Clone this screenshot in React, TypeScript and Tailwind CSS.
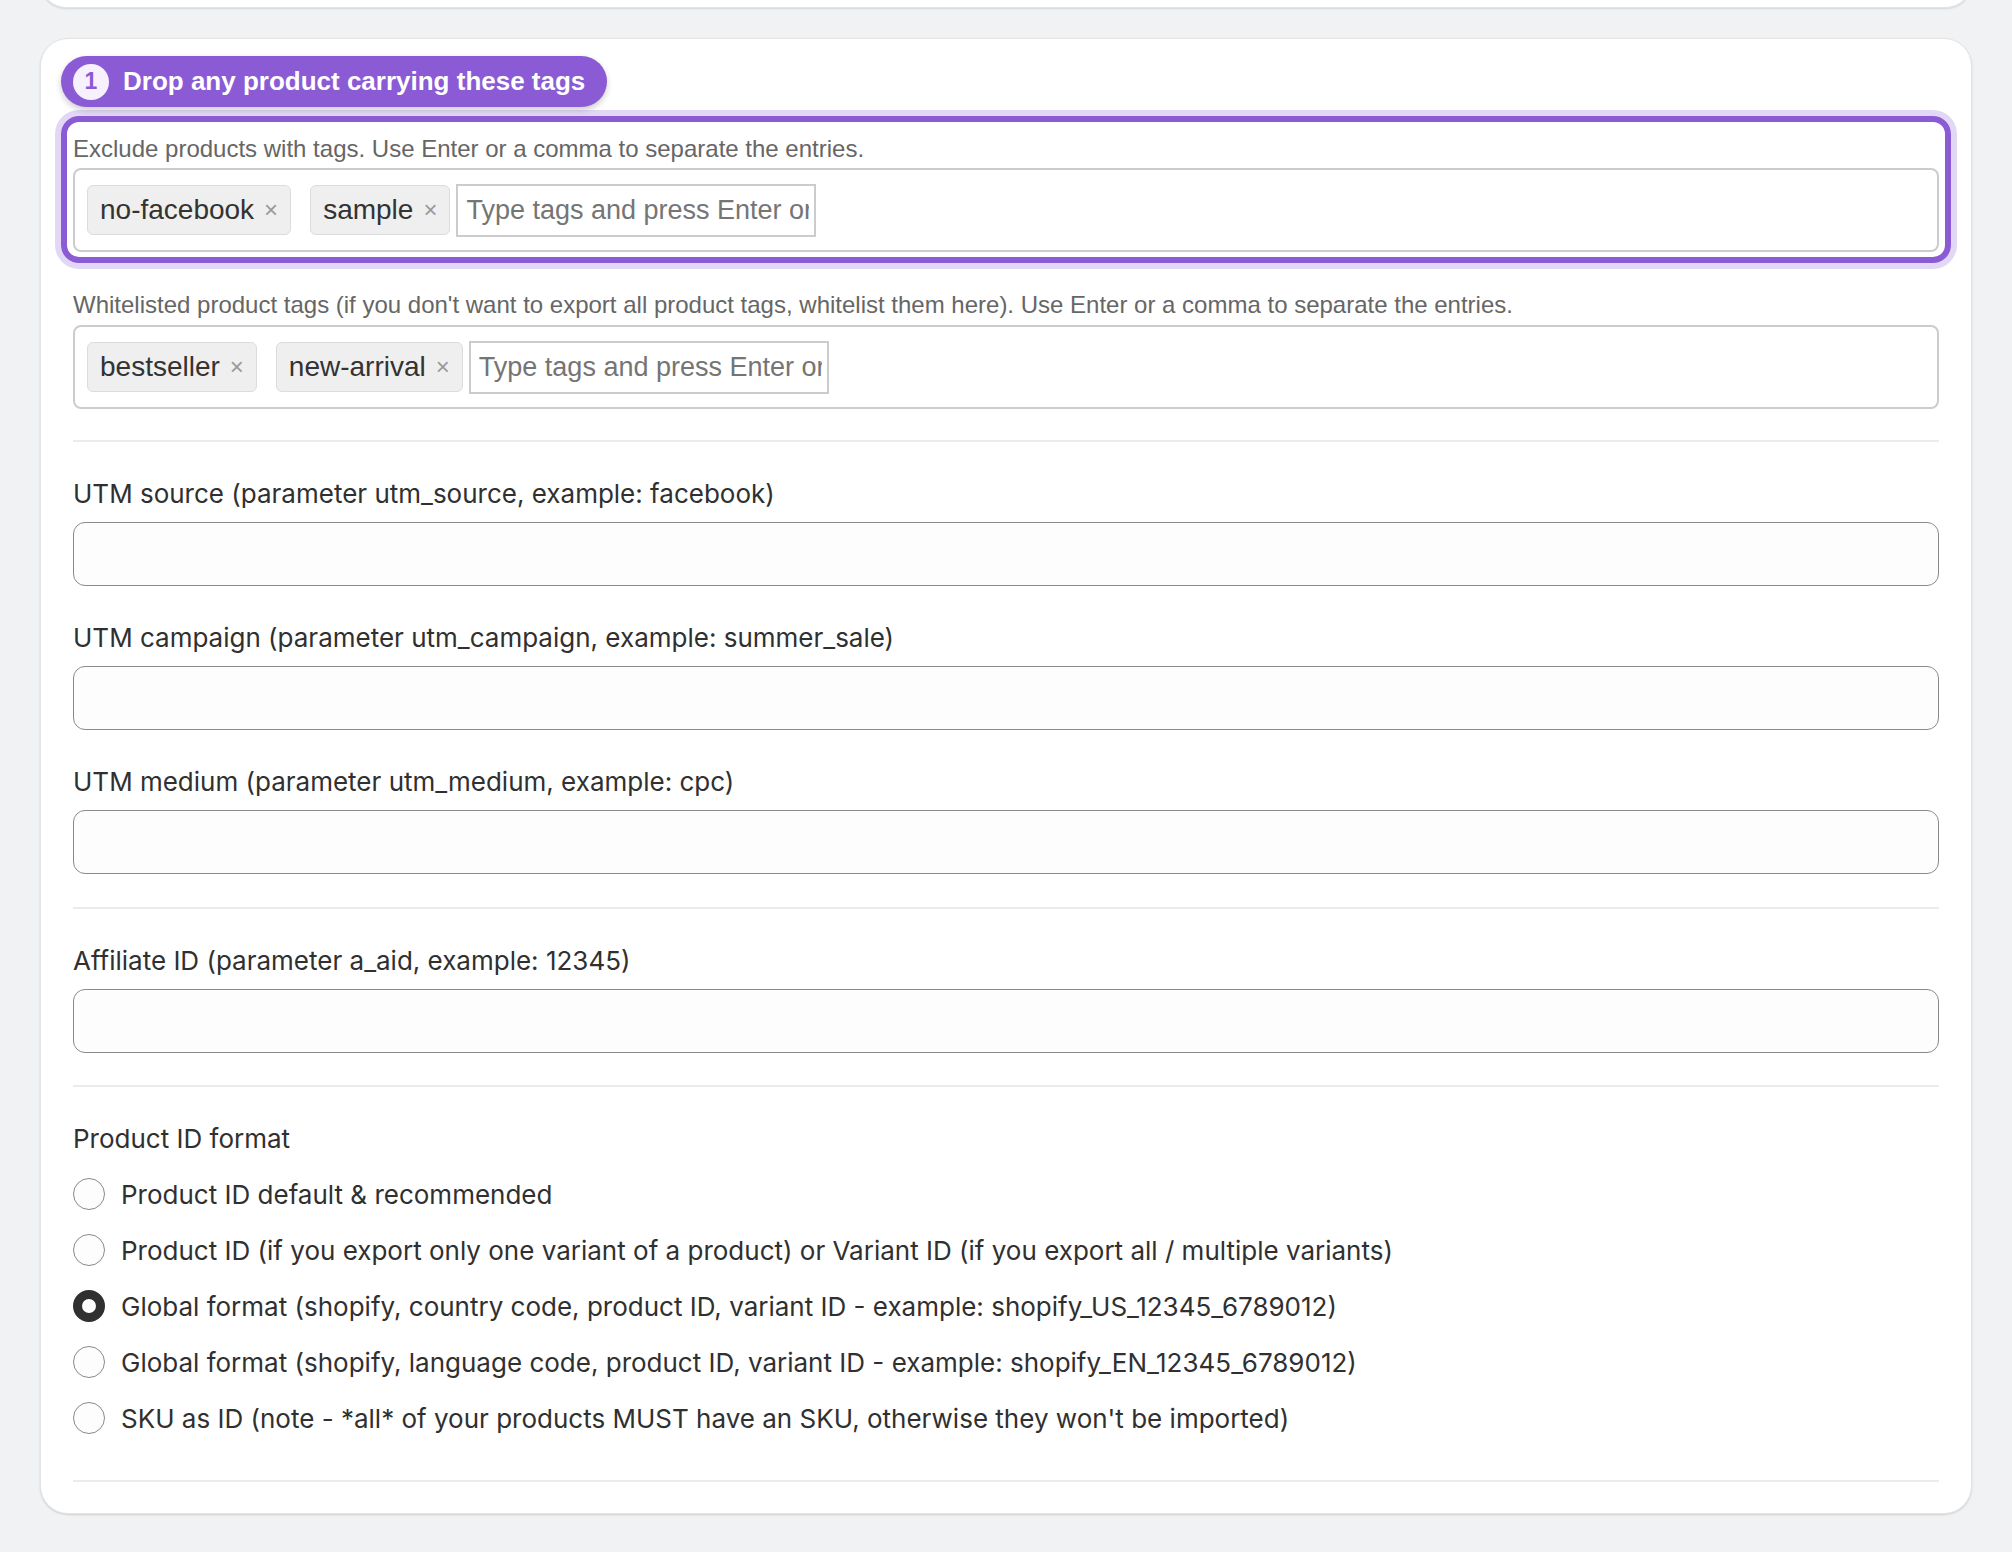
import React from "react";

const SANS = "font-['Liberation_Sans',Arial,sans-serif]";

function Chip({ label, first }: { label: string; first?: boolean }) {
  return (
    <span
      className={`inline-flex items-center h-[50px] pl-[12px] pr-[12px] rounded-[6px] border border-[#dcdcdc] bg-[#efefef] text-[28px] text-[#333333] ${first ? "" : "ml-[19px]"}`}
    >
      <span>{label}</span>
      <span className="ml-[10px] text-[24px] text-[#9a9a9a]">×</span>
    </span>
  );
}

function TagBox({ tags }: { tags: string[] }) {
  return (
    <div className={`flex items-center h-[84px] rounded-[8px] border-2 border-[#cccccc] bg-white pl-[12px] ${SANS}`}>
      {tags.map((t, i) => (
        <Chip key={t} label={t} first={i === 0} />
      ))}
      <input
        readOnly
        placeholder="Type tags and press Enter or comma"
        className="ml-[6px] w-[360px] h-[53px] border-2 border-[#cccccc] bg-white pl-[8px] pr-[5px] text-[27px] text-[#333] placeholder:text-[#757575] outline-none"
      />
    </div>
  );
}

function Field({ label, mt }: { label: string; mt: string }) {
  return (
    <div className={mt}>
      <div className="text-[26px] leading-[36px] text-[#303030]">{label}</div>
      <div className="mt-[10px] h-[64px] rounded-[12px] border border-[#8a8a8a] bg-[#fdfdfd]" />
    </div>
  );
}

function Divider({ mt }: { mt: string }) {
  return <div className={`${mt} h-[2px] bg-[#ebebeb]`} />;
}

function Radio({ label, checked }: { label: string; checked?: boolean }) {
  return (
    <div className="flex items-center h-[56px]">
      <span
        className={
          checked
            ? "w-[32px] h-[32px] shrink-0 rounded-full border-[9px] border-[#303030] bg-white"
            : "w-[32px] h-[32px] shrink-0 rounded-full border-[1.5px] border-[#8a8a8a] bg-[#fdfdfd]"
        }
      />
      <span className="ml-[16px] text-[26px] text-[#303030]">{label}</span>
    </div>
  );
}

export default function App() {
  return (
    <div className="min-h-screen bg-[#f1f2f4] px-[40px] pb-[40px] font-['Inter',sans-serif]">
      {/* previous card peeking at top */}
      <div className="-mt-[40px] h-[48px] rounded-b-[26px] border border-t-0 border-[#e3e3e3] bg-white shadow-[0_1px_2px_rgba(0,0,0,0.12)]" />

      <div className="mt-[30px] rounded-[28px] border border-[#e4e4e4] bg-white px-[32px] pt-[17px] pb-[31px] shadow-[0_1px_2px_rgba(0,0,0,0.15)]">
        {/* pill header */}
        <div
          className={`-ml-[12px] inline-flex items-center h-[51px] rounded-full bg-[#8b5bd5] pl-[12px] pr-[22px] shadow-[0_3px_6px_rgba(0,0,0,0.2)] ${SANS}`}
        >
          <span className="flex items-center justify-center w-[36px] h-[36px] rounded-full bg-[#f6f1fd] text-[23px] font-bold text-[#8b5bd5]">
            1
          </span>
          <span className="ml-[14px] text-[26px] font-bold text-white">Drop any product carrying these tags</span>
        </div>

        {/* highlighted field */}
        <div className="mt-[9px] -mx-[12px] rounded-[18px] border-[6px] border-[#8b5bd5] px-[6px] pt-[10px] pb-[5px] shadow-[0_0_0_6px_#e2d8f6]">
          <div className={`text-[24px] leading-[34px] text-[#666666] ${SANS}`}>
            Exclude products with tags. Use Enter or a comma to separate the entries.
          </div>
          <div className="mt-[2px]">
            <TagBox tags={["no-facebook", "sample"]} />
          </div>
        </div>

        {/* whitelist */}
        <div className="mt-[25px]">
          <div className={`text-[24px] leading-[34px] text-[#666666] ${SANS}`}>
            Whitelisted product tags (if you don't want to export all product tags, whitelist them here). Use Enter or a comma to separate the entries.
          </div>
          <div className="mt-[3px]">
            <TagBox tags={["bestseller", "new-arrival"]} />
          </div>
        </div>

        <Divider mt="mt-[31px]" />

        <Field mt="mt-[34px]" label="UTM source (parameter utm_source, example: facebook)" />
        <Field mt="mt-[34px]" label="UTM campaign (parameter utm_campaign, example: summer_sale)" />
        <Field mt="mt-[34px]" label="UTM medium (parameter utm_medium, example: cpc)" />

        <Divider mt="mt-[33px]" />

        <Field mt="mt-[34px]" label="Affiliate ID (parameter a_aid, example: 12345)" />

        <Divider mt="mt-[32px]" />

        <div className="mt-[34px] text-[26px] leading-[36px] text-[#303030]">Product ID format</div>
        <div className="mt-[9px] flex flex-col">
          <Radio label="Product ID default & recommended" />
          <Radio label="Product ID (if you export only one variant of a product) or Variant ID (if you export all / multiple variants)" />
          <Radio checked label="Global format (shopify, country code, product ID, variant ID - example: shopify_US_12345_6789012)" />
          <Radio label="Global format (shopify, language code, product ID, variant ID - example: shopify_EN_12345_6789012)" />
          <Radio label="SKU as ID (note - *all* of your products MUST have an SKU, otherwise they won't be imported)" />
        </div>

        <Divider mt="mt-[34px]" />
      </div>
    </div>
  );
}
